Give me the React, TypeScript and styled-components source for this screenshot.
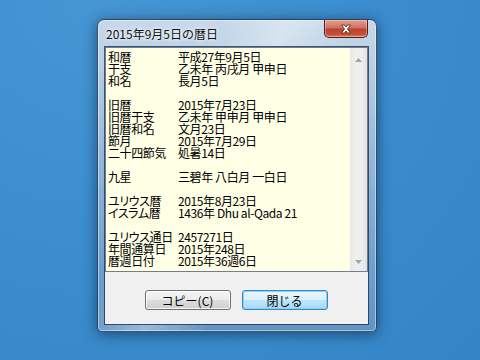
import * as React from 'react'
import styled, { createGlobalStyle } from 'styled-components'

type Row = [string, string] | null

const rows: Row[] = [
  ['和暦', '平成27年9月5日'],
  ['干支', '乙未年 丙戌月 甲申日'],
  ['和名', '長月5日'],
  null,
  ['旧暦', '2015年7月23日'],
  ['旧暦干支', '乙未年 甲申月 甲申日'],
  ['旧暦和名', '文月23日'],
  ['節月', '2015年7月29日'],
  ['二十四節気', '処暑14日'],
  null,
  ['九星', '三碧年 八白月 一白日'],
  null,
  ['ユリウス暦', '2015年8月23日'],
  ['イスラム暦', '1436年 Dhu al-Qada 21'],
  null,
  ['ユリウス通日', '2457271日'],
  ['年間通算日', '2015年248日'],
  ['暦週日付', '2015年36週6日'],
]

const Global = createGlobalStyle`
  html, body {
    margin: 0;
    padding: 0;
  }
  body {
    font-family: "Noto Sans CJK JP", "Liberation Sans", sans-serif;
    font-size: 12px;
  }
`

const Desktop = styled.div`
  position: relative;
  width: 480px;
  height: 360px;
  overflow: hidden;
  background: radial-gradient(ellipse at 20% 0%, #4596d3 0%, #3b8dcd 50%, #3485c6 100%);
`

const Window = styled.div`
  position: absolute;
  left: 97px;
  top: 19px;
  width: 280px;
  height: 313px;
  box-sizing: border-box;
  display: flex;
  flex-direction: column;
  padding: 0 8px 7px 7px;
  border: 1px solid rgba(20, 40, 60, 0.75);
  border-radius: 7px 7px 5px 5px;
  background:
    linear-gradient(115deg, rgba(255, 255, 255, 0) 30%, rgba(255, 255, 255, 0.35) 45%, rgba(255, 255, 255, 0) 60%),
    linear-gradient(180deg, #c6d8ea 0%, #bcd1e6 12%, #93b7da 45%, #6e9fcd 80%, #6094c6 100%);
  box-shadow:
    0 2px 14px rgba(0, 20, 50, 0.55),
    inset 0 0 0 1px rgba(255, 255, 255, 0.45);
`

const TitleBar = styled.div`
  height: 27px;
  display: flex;
  justify-content: space-between;
  align-items: flex-start;
  padding-left: 1px;
`

const Title = styled.div`
  margin-top: 6px;
  font-size: 12px;
  line-height: 16px;
  color: #111;
  text-shadow: 0 0 6px rgba(255, 255, 255, 0.9), 0 0 3px rgba(255, 255, 255, 0.9);
`

const CloseButton = styled.div`
  width: 44px;
  height: 18px;
  box-sizing: border-box;
  display: flex;
  align-items: center;
  justify-content: center;
  border: 1px solid #4f2018;
  border-top: none;
  border-radius: 0 0 5px 5px;
  background: linear-gradient(180deg, #e3a090 0%, #d37060 45%, #bd412c 55%, #c4503a 85%, #dc8466 100%);
  box-shadow: inset 0 0 0 1px rgba(255, 220, 200, 0.45);
`

const Client = styled.div`
  flex: 1;
  display: flex;
  flex-direction: column;
  background: #f0f0f0;
  box-shadow: 0 0 0 1px rgba(30, 50, 80, 0.8);
`

const TextBox = styled.div`
  height: 225px;
  box-sizing: border-box;
  display: flex;
  border: 1px solid #6f7f90;
  background: #ffffe6;
`

const Content = styled.div`
  flex: 1;
  display: grid;
  grid-template-columns: 70px 1fr;
  grid-auto-rows: 12px;
  align-content: start;
  padding: 3px 0 0 2px;
  font-size: 12px;
  line-height: 12px;
  color: #000;
  white-space: nowrap;
  letter-spacing: -0.4px;
  font-feature-settings: "palt";
`

const Cell = styled.div`
  height: 12px;
`

const Blank = styled.div`
  grid-column: 1 / span 2;
  height: 12px;
`

const ScrollBar = styled.div`
  width: 17px;
  display: flex;
  flex-direction: column;
  justify-content: space-between;
  background: linear-gradient(90deg, #e6e6e6 0%, #efefef 30%, #ececec 70%, #e2e2e2 100%);
`

const ArrowBox = styled.div<{ $h: number }>`
  height: ${p => p.$h}px;
  display: flex;
  align-items: center;
  justify-content: center;
`

const ButtonRow = styled.div`
  display: flex;
  justify-content: center;
  gap: 11px;
  padding-top: 18px;
  padding-right: 1px;
`

const Button = styled.div<{ $default?: boolean }>`
  width: 86px;
  height: 20px;
  box-sizing: border-box;
  display: flex;
  align-items: center;
  justify-content: center;
  font-size: 12px;
  color: #000;
  border-radius: 3px;
  border: 1px solid ${p => (p.$default ? '#3c86c8' : '#707070')};
  background: ${p =>
    p.$default
      ? 'linear-gradient(180deg, #eaf6fd 0%, #d9f0fc 50%, #bee6fd 50%, #a7d9f5 100%)'
      : 'linear-gradient(180deg, #f4f4f4 0%, #ebebeb 50%, #dddddd 50%, #cfcfcf 100%)'};
  box-shadow: inset 0 0 0 1px ${p => (p.$default ? 'rgba(120, 210, 250, 0.9)' : 'rgba(255, 255, 255, 0.8)')};
`

const Arrow = ({ up }: { up?: boolean }) => (
  <svg width="7" height="4" viewBox="0 0 7 4">
    <path d={up ? 'M0 4 L3.5 0 L7 4 Z' : 'M0 0 L3.5 4 L7 0 Z'} fill="#a3a3a3" />
  </svg>
)

const CloseGlyph = () => (
  <svg width="12" height="10" viewBox="0 0 12 10">
    <path
      d="M1.5 1 L4.5 1 L6 3 L7.5 1 L10.5 1 L7.5 5 L10.5 9 L7.5 9 L6 7 L4.5 9 L1.5 9 L4.5 5 Z"
      fill="#ffffff"
      stroke="#5a2a22"
      strokeWidth="0.9"
      strokeLinejoin="round"
    />
  </svg>
)

const App = () => {
  return (
    <Desktop>
      <Global />
      <Window>
        <TitleBar>
          <Title>2015年9月5日の暦日</Title>
          <CloseButton>
            <CloseGlyph />
          </CloseButton>
        </TitleBar>
        <Client>
          <TextBox>
            <Content>
              {rows.map((r, i) =>
                r ? (
                  <React.Fragment key={i}>
                    <Cell>{r[0]}</Cell>
                    <Cell>{r[1]}</Cell>
                  </React.Fragment>
                ) : (
                  <Blank key={i} />
                )
              )}
            </Content>
            <ScrollBar>
              <ArrowBox $h={24}>
                <Arrow up />
              </ArrowBox>
              <ArrowBox $h={18}>
                <Arrow />
              </ArrowBox>
            </ScrollBar>
          </TextBox>
          <ButtonRow>
            <Button>コピー(C)</Button>
            <Button $default>閉じる</Button>
          </ButtonRow>
        </Client>
      </Window>
    </Desktop>
  )
}

export default App
